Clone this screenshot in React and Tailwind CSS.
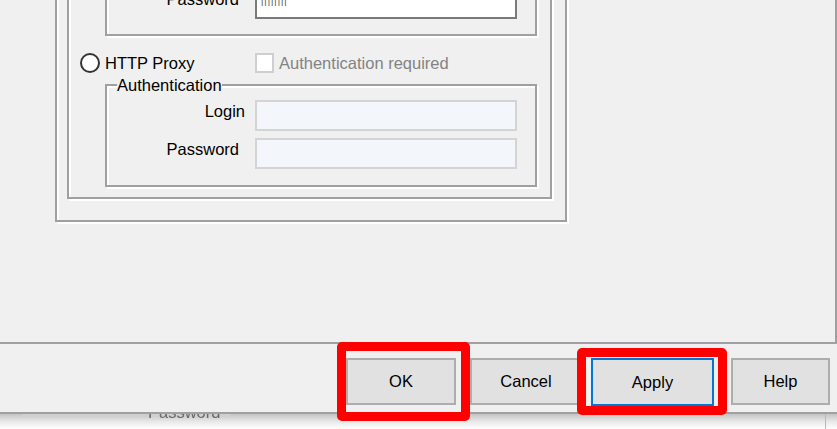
import React from 'react';

const etch = 'border-2 border-[#a0a0a0] shadow-[2px_2px_0_#fff,inset_2px_2px_0_#fff]';

const FieldRow = ({ label, labelPad, enabled, masked }) => (
  <div className="flex items-center h-[31px]">
    <div className={`w-[148px] text-right leading-[20px] mb-[9px] ${labelPad}`}>{label}</div>
    <div
      className={`w-[262px] h-[31px] flex items-end pl-[4px] ${
        enabled ? 'bg-white border-2 border-[#7a7a7a]' : 'bg-[#f3f6fb] border-2 border-[#d4d4d4]'
      }`}
    >
      {masked && (
        <span className="text-[9px] leading-[12px] tracking-[1px] text-[#444] mb-[10px]">||||||||</span>
      )}
    </div>
  </div>
);

const Group = ({ legend, className, children }) => (
  <div className={`relative w-[432px] h-[103px] ml-[36px] ${etch} ${className}`}>
    {legend && (
      <span className="absolute left-[10px] -top-[11px] leading-[20px] bg-[#f0f0f0]">{legend}</span>
    )}
    <div className="flex flex-col gap-[7px]">{children}</div>
  </div>
);

const Button = ({ label, width, focused, children }) => (
  <div className={`relative ${width}`}>
    <div
      className={`flex items-center justify-center bg-[#e1e1e1] ${
        focused ? 'h-[48px] border-2 border-[#0078d7]' : 'h-[47px] border-2 border-[#adadad]'
      }`}
    >
      {label}
    </div>
    {children}
  </div>
);

export default function App() {
  return (
    <div
      className="w-[837px] h-[429px] overflow-hidden bg-white text-black text-[16.5px]"
      style={{ fontFamily: '"Liberation Sans", Arial, sans-serif' }}
    >
      {/* dialog body */}
      <div className="h-[344px] bg-[#f0f0f0] border-r-2 border-b-2 border-[#a0a0a0] overflow-hidden">
        <div className={`ml-[55px] mt-[-100px] w-[512px] h-[322px] pt-[8px] pl-[10px] ${etch}`}>
          <div className={`w-[485px] h-[289px] pt-[21px] ${etch}`}>
            <Group className="pt-[15px]">
              <FieldRow label="Login" labelPad="pr-[10px]" enabled />
              <FieldRow label="Password" labelPad="pr-[16px]" enabled masked />
            </Group>

            <div className="flex items-center h-[22px] mt-[16px] ml-[11px]">
              <div className="flex items-center w-[175px]">
                <div className="w-[20px] h-[20px] rounded-full border-2 border-[#333] bg-white" />
                <span className="ml-[5px] leading-[20px]">HTTP Proxy</span>
              </div>
              <div className="w-[19px] h-[20px] border-2 border-[#cfcfcf] bg-white" />
              <span className="ml-[5px] leading-[20px] text-[#838383]">Authentication required</span>
            </div>

            <Group legend="Authentication" className="mt-[10px] pt-[14px]">
              <FieldRow label="Login" labelPad="pr-[10px]" />
              <FieldRow label="Password" labelPad="pr-[16px]" />
            </Group>
          </div>
        </div>
      </div>

      {/* button bar */}
      <div className="h-[70px] bg-[#f0f0f0] border-b-2 border-[#a0a0a0] flex pt-[14px]">
        <div className="flex ml-[346px]">
          <Button label="OK" width="w-[110px]">
            <div className="absolute -left-[9px] -top-[16px] -right-[14px] -bottom-[9px] border-[9px] border-[#ff0000] rounded-[5px]" />
          </Button>
          <div className="ml-[14px]">
            <Button label="Cancel" width="w-[112px]" />
          </div>
          <div className="ml-[9px]">
            <Button label="Apply" width="w-[123px]" focused>
              <div className="absolute -left-[14px] -top-[10px] -right-[13px] -bottom-[9px] border-[9px] border-[#ff0000] rounded-[5px]" />
            </Button>
          </div>
          <div className="ml-[17px]">
            <Button label="Help" width="w-[99px]" />
          </div>
        </div>
      </div>

      {/* window behind, in shadow */}
      <div className="h-[15px] flex bg-gradient-to-b from-[#c4c4c4] via-[#e8e8e8] to-white overflow-hidden">
        <div className="w-[826px] border-r border-[#b8b8b8] flex">
          <div className="ml-[22px] w-[208px] h-[2px] bg-[#d0d0d0]" />
          <span className="ml-[-82px] -mt-[12px] leading-[20px] text-[#6a6a6a] blur-[0.6px]">Password</span>
        </div>
      </div>
    </div>
  );
}
